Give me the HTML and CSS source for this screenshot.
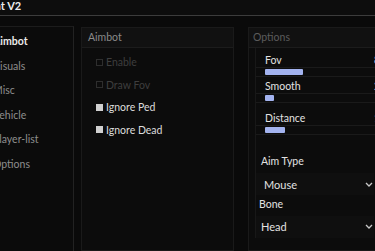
FILE: index.html
```html
<!DOCTYPE html>
<html lang="en">
<head>
  <meta charset="UTF-8">
  <title>Cheat V2</title>
  <link rel="stylesheet" href="styles.css">
</head>
<body>

<div class="window">
  <div class="titlebar">Cheat V2</div>

  <div class="main">
    <nav class="sidebar">
      <div class="tab active">Aimbot</div>
      <div class="tab">Visuals</div>
      <div class="tab">Misc</div>
      <div class="tab">Vehicle</div>
      <div class="tab">Player-list</div>
      <div class="tab">Options</div>
    </nav>

    <section class="panel aimbot">
      <div class="panelHead">Aimbot</div>
      <div class="panelBody">
        <label class="check disabled"><span class="box"></span>Enable</label>
        <label class="check disabled"><span class="box"></span>Draw Fov</label>
        <label class="check on"><span class="box"></span>Ignore Ped</label>
        <label class="check on"><span class="box"></span>Ignore Dead</label>
      </div>
    </section>

    <section class="panel options">
      <div class="panelHead">Options</div>
      <div class="panelBody">
        <div class="slider">
          <div class="sliderHead"><span class="sliderName">Fov</span><span class="sliderValue">80</span></div>
          <div class="track"><div class="fill" style="width: 38px"></div></div>
        </div>
        <div class="slider">
          <div class="sliderHead"><span class="sliderName">Smooth</span><span class="sliderValue">2</span></div>
          <div class="track"><div class="fill" style="width: 9px"></div></div>
        </div>
        <div class="slider wide">
          <div class="sliderHead"><span class="sliderName">Distance</span><span class="sliderValue">150</span></div>
          <div class="track"><div class="fill" style="width: 20px"></div></div>
        </div>

        <div class="field">
          <div class="fieldName">Aim Type</div>
          <div class="select"><span>Mouse</span>
            <svg class="chevron" width="8" height="5" viewBox="0 0 8 5"><polyline points="1,1 4,4 7,1" fill="none" stroke="#c8c8c8" stroke-width="1.3"/></svg>
          </div>
        </div>
        <div class="field bone">
          <div class="fieldName">Bone</div>
          <div class="select"><span>Head</span>
            <svg class="chevron" width="8" height="5" viewBox="0 0 8 5"><polyline points="1,1 4,4 7,1" fill="none" stroke="#c8c8c8" stroke-width="1.3"/></svg>
          </div>
        </div>
      </div>
    </section>
  </div>
</div>

</body>
</html>
```

FILE: styles.css
```css
*, *:before, *:after {
  box-sizing: border-box;
}

html, body {
  width: 375px;
  height: 251px;
  overflow: hidden;
}

body {
  margin: 0;
  background: #0a0a0a;
  font-family: Lato, "Liberation Sans", sans-serif;
  font-size: 10px;
  color: #e2e2e2;
}

.window {
  margin-left: -28px;
  width: 520px;
  height: 251px;
  display: flex;
  flex-direction: column;
}

.titlebar {
  height: 16px;
  line-height: 12px;
  padding-left: 4px;
  font-size: 11px;
  font-weight: bold;
  color: #ececec;
  border-bottom: 1px solid #3c3c3c;
  background: #0d0d0d;
}

.main {
  flex: 1;
  display: flex;
  padding-top: 10px;
}

/* left tabs */
.sidebar {
  flex: none;
  width: 102px;
  border-top: 1px solid #1c1c1c;
  border-right: 1px solid #222;
  background: #0b0b0b;
  padding-top: 2px;
}

.tab {
  height: 24.5px;
  line-height: 24.5px;
  padding-left: 21px;
  font-size: 10.5px;
  color: #8e8e8e;
}

.tab.active {
  color: #ececec;
  font-weight: bold;
}

/* panels */
.panel {
  flex: none;
  margin-top: 1px;
  border: 1px solid #1a1a1a;
  background: #0c0c0c;
}

.aimbot {
  width: 153px;
  margin-left: 7px;
}

.options {
  width: 220px;
  margin-left: 14px;
}

.panelHead {
  height: 20px;
  line-height: 18px;
  padding-left: 6px;
  background: #111;
  border-bottom: 1px solid #1c1c1c;
  color: #8a8a8a;
  font-size: 10.5px;
}

.options .panelHead {
  padding-left: 4px;
  color: #5c5c5c;
}

.aimbot .panelBody {
  padding: 3px 0 0 14px;
}

.check {
  display: flex;
  align-items: center;
  height: 22.5px;
  font-size: 10.5px;
  color: #dcdcdc;
}

.check .box {
  width: 7px;
  height: 7px;
  margin-right: 3px;
  border: 1px solid #2e2e2e;
}

.check.on .box {
  background: #d0d0d0;
  border-color: #d0d0d0;
}

.check.disabled {
  color: #3e3e3e;
}

/* options body */
.options .panelBody {
  margin-left: 6px;
  border-left: 1px solid #181818;
  padding-top: 5px;
}

.slider {
  margin-bottom: 2px;
}

.slider.wide {
  margin-top: 8px;
}

.sliderHead {
  display: flex;
  height: 14px;
  line-height: 14px;
  padding-left: 9px;
  font-size: 10.5px;
}

.sliderName {
  width: 109px;
}

.track {
  height: 10px;
  border-top: 1px solid #1a1a1a;
  border-bottom: 1px solid #1a1a1a;
  padding: 1px 0 0 9px;
}

.fill {
  height: 6px;
  border-radius: 1px;
  background: #a3b3ef;
}

.field {
  margin-top: 19px;
}

.fieldName {
  height: 15px;
  line-height: 15px;
  padding-left: 5px;
  font-size: 10.5px;
}

.select {
  display: flex;
  align-items: center;
  height: 22px;
  margin-top: 4px;
  padding-left: 8px;
  background: #0f0f0f;
  width: 118px;
  font-size: 11px;
}

.select span {
  flex: 1;
}

.chevron {
  margin-right: 1px;
}

.field.bone {
  margin-top: 1.5px;
}

.bone .fieldName {
  padding-left: 3px;
}

.bone .select {
  padding-left: 5px;
}
```
